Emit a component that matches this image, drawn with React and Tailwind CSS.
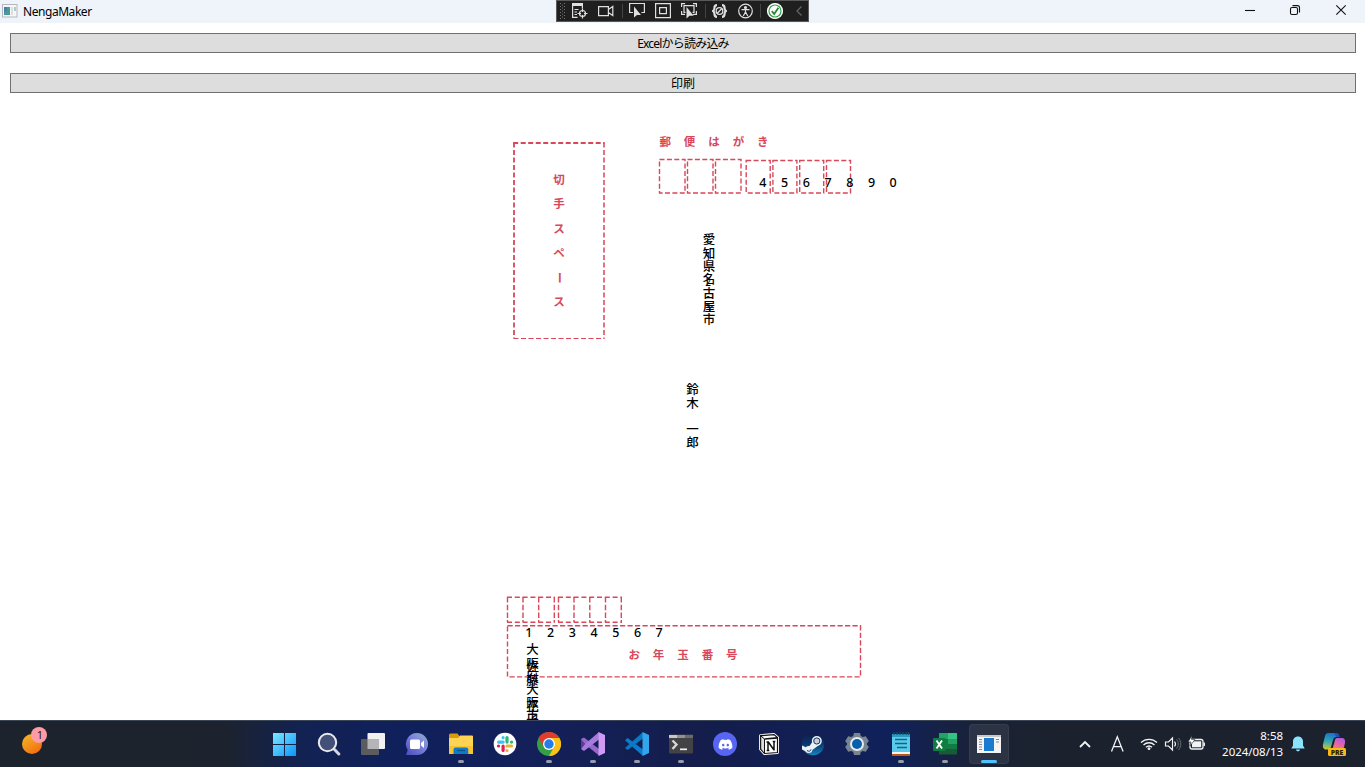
import React from "react";
import { FaDiscord } from "react-icons/fa";

const JP = "font-['Noto_Sans','Noto_Sans_CJK_JP',sans-serif]";
const RED = "#d9475a";

/* ---------- window chrome ---------- */

function DebugToolbar() {
  return (
    <div className="absolute left-[556px] top-0 flex h-[22px] w-[253px] border border-[#5a5a5a] bg-[#1f1f1f]">
      <svg width="251" height="20" viewBox="557 1 251 20" fill="none" stroke="#e0e0e0" strokeWidth="1.2">
        <g stroke="#777" strokeWidth="1" strokeDasharray="1 2">
          <path d="M560.5 3v16M564.5 3v16" />
          <path d="M562.5 4.5v14" />
        </g>
        <path d="M572 4.5h11" strokeWidth="3" />
        <path d="M572.6 4v13.4h5M582.4 5v3.500M574.500 9.500h4M574.500 12h2.500M574.500 14.500h2.500" />
        <circle cx="582.500" cy="13.500" r="3" />
        <path d="M582.500 8.500v3.500M582.500 15v3.500M577.500 13.500h3.500M584 13.500h3.500" />
        <path d="M598.600 6.600h9.800v9h-9.800zM608.400 9.500l4.400-3v9l-4.400-3" />
        <path d="M622.500 4v14M705.500 4v14M760.500 4v14" stroke="#444" strokeWidth="1" />
        <path d="M633 12.500h-3.400v-9h14.800v9h-3" />
        <path d="M634 6.500v11l3-2.600h4z" fill="#e0e0e0" stroke="none" />
        <path d="M655.600 3.600h14.800v14h-14.800zM659.600 7.600h6.800v6h-6.800z" />
        <path d="M681.600 7v-3.400h3.500M693 3.600h3.400v3.400M681.600 11v3.400h3.400M696.400 11v3.400h-3.400M687.500 5.600h-3.500v6.800h1.500M687.500 5.600h6.500v6.800h-1.500" />
        <path d="M686.500 7v11.500l3-2.800h4.200z" fill="#e0e0e0" stroke="none" />
        <path d="M717 5.200c-2.200 0-2.500.8-2.500 2.500 0 2-.5 2.800-1.500 3.300 1 .5 1.500 1.300 1.500 3.300 0 1.700.3 2.500 2.500 2.500M722 5.200c2.200 0 2.500.8 2.500 2.500 0 2 .5 2.800 1.500 3.300-1 .5-1.500 1.300-1.500 3.300 0 1.700-.3 2.500-2.500 2.500" strokeWidth="2.200" strokeLinejoin="round" />
        <circle cx="719.500" cy="11" r="3.300" strokeWidth="1.300" />
        <path d="M717.300 13.200l4.400-4.400" strokeWidth="1.300" />
        <circle cx="745.500" cy="11" r="6.800" />
        <circle cx="745.500" cy="7.500" r="1" fill="#e0e0e0" />
        <path d="M741.500 9.600h8M745.500 9.600v3.400M745.300 12.200l-2 3.800M745.700 12.200l2 3.800" />
        <circle cx="775" cy="11" r="7.500" fill="#fff" stroke="#fff" />
        <circle cx="775" cy="11" r="6" fill="#fff" stroke="#36a34a" />
        <path d="M771.800 11.200l2.400 2.800 4.200-6.200" stroke="#238a35" strokeWidth="1.800" />
        <path d="M801.500 6.500l-4.500 4.500 4.500 4.500" stroke="#666" />
      </svg>
    </div>
  );
}

function TitleBar() {
  return (
    <header className="relative flex h-[23px] items-center bg-[#eff3fa]">
      <svg className="-mt-[2px] ml-[2px] shrink-0" width="16" height="14" viewBox="0 0 16 14">
        <rect x=".5" y=".5" width="14.500" height="12.500" fill="#f6f6f6" stroke="#b4b8bd" />
        <rect x="2" y="3" width="6" height="8" fill="#4d9a92" />
        <path d="M2 3h3v3l-3 3z" fill="#4580b4" />
        <rect x="9" y="3" width="2" height="8" fill="#dedede" />
        <rect x="12" y="3" width="2" height="4" fill="#a8cfc3" />
      </svg>
      <span className={`ml-[5px] text-[12px] leading-none tracking-[-0.45px] text-black ${JP}`}>NengaMaker</span>
      <svg className="-mt-[2px] ml-auto mr-[13px]" width="108" height="14" viewBox="0 0 108 14" fill="none" stroke="#111" strokeWidth="1.100">
        <path d="M1 6.500h10" />
        <rect x="46.500" y="3.500" width="7" height="7" rx="1.500" />
        <path d="M48.500 1.600h5c1.300 0 2 .8 2 2v5" />
        <path d="M92.300 1.300l9.400 9.400M101.700 1.300l-9.400 9.400" />
      </svg>
      <DebugToolbar />
    </header>
  );
}

function WideButton({ children, className = "" }) {
  return (
    <button className={`flex h-[20px] w-full items-center justify-center border border-[#707070] bg-[#dddddd] pt-[2px] text-[12px] leading-none text-black ${JP} ${className}`}>
      {children}
    </button>
  );
}

/* ---------- postcard canvas ---------- */

function RowText({ text, className }) {
  return (
    <div className={`absolute flex leading-none ${JP} ${className}`}>
      {[...text].map((c, i) => (
        <span key={i} className="flex w-full items-center justify-center">{c}</span>
      ))}
    </div>
  );
}

/* Vertical writing, one cell per character; the long vowel mark is turned upright. */
function ColumnText({ text, className }) {
  return (
    <div className={`absolute flex flex-col items-center leading-none ${JP} ${className}`}>
      {[...text].map((c, i) => (
        <span key={i} className="flex min-h-0 w-full flex-1 items-center justify-center">
          <span className={c === "ー" ? "rotate-90" : ""}>{c}</span>
        </span>
      ))}
    </div>
  );
}

function Frames() {
  const upper = [659.5, 687.5, 715.5];
  const lower = [746.2, 772.9, 799.7, 826.500];
  return (
    <svg className="absolute left-0 top-0" width="1365" height="627" viewBox="0 93 1365 627" fill="none" stroke={RED} strokeWidth="1.500" strokeDasharray="5 2.500">
      <path d="M513.200 143h91.300" strokeWidth="1.800" />
      <path d="M514 142.500v196" strokeWidth="1.800" />
      <path d="M604 142.500v196" />
      <path d="M513.500 338.500h91" strokeWidth="1.200" />
      {upper.map((x) => (
        <path key={x} d={`M${x} 159.500h25.500v33.500h-25.500z`} strokeDasharray="5 2.400" strokeWidth="1.400" />
      ))}
      {lower.map((x) => (
        <path key={x} d={`M${x} 160.500h24v32.500h-24z`} strokeDasharray="5 2.400" strokeWidth="1.400" />
      ))}
      <path d="M507 597.200h47.800M558 597.200h64M507 622.300h47.800M558 622.300h64" strokeDasharray="5 2.800" strokeWidth="1.400" />
      <path d="M507.500 597v25M523 597v25M538.700 597v25M554.300 597v25M558.500 597v25M574 597v25M589.800 597v25M605.500 597v25M621.300 597v25" strokeDasharray="5.500 2.200" strokeWidth="1.400" />
      <path d="M507.500 625.700h353v51.200h-353z" strokeDasharray="5.200 2.300" strokeWidth="1.400" />
    </svg>
  );
}

function Postcard() {
  return (
    <main className="relative min-h-0 flex-1 overflow-hidden bg-white">
      <Frames />
      <RowText text="郵便はがき" className="left-[653px] top-[43px] w-[122px] text-[11.500px] font-bold text-[#d9475a]" />
      <ColumnText text="切手スペース" className="left-[549px] top-[74px] h-[147px] w-[20px] text-[11.500px] font-bold text-[#d9475a]" />
      <RowText text="お年玉番号" className="left-[622px] top-[556px] w-[122px] text-[11.500px] font-bold text-[#d9475a]" />
      <RowText text="4567890" className="left-[752px] top-[84px] w-[152px] text-[12.500px] font-medium text-black" />
      <RowText text="1234567" className="left-[518px] top-[534px] w-[152px] text-[12.500px] font-medium text-black" />
      <ColumnText text="愛知県名古屋市" className="left-[699px] top-[141px] h-[93px] w-[20px] text-[12.500px] font-medium text-black" />
      <ColumnText text="1-2-3" className="left-[698px] top-[156px] h-[66px] w-[20px] text-[10px] text-black" />
      <ColumnText text="鈴木　一郎" className="left-[682px] top-[291px] h-[66px] w-[21px] text-[12.500px] font-medium text-black" />
      <ColumnText text="大阪府大阪市" className="left-[522px] top-[551px] h-[79px] w-[21px] text-[12.500px] font-medium text-black" />
      <ColumnText text="佐藤　花子" className="left-[522px] top-[568px] h-[66px] w-[21px] text-[12.500px] font-medium text-black" />
    </main>
  );
}

/* ---------- taskbar icons, each on a 24 x 24 grid ---------- */

const Icon = ({ children }) => (
  <svg width="24" height="24" viewBox="0 0 24 24" fill="none">{children}</svg>
);

const StartIcon = () => (
  <Icon>
    <defs>
      <linearGradient id="start" x1="0" y1="0" x2="24" y2="24" gradientUnits="userSpaceOnUse">
        <stop stopColor="#7eeaff" /><stop offset="1" stopColor="#0794fa" />
      </linearGradient>
    </defs>
    <path fill="url(#start)" d="M0 1h11v11h-11zM12 1h11v11h-11zM0 13h11v11h-11zM12 13h11v11h-11z" />
  </Icon>
);

const SearchIcon = () => (
  <Icon>
    <path d="M17.500 17.500l4.300 4.500" stroke="#d5d8df" strokeWidth="3" strokeLinecap="round" />
    <circle cx="10.500" cy="10.500" r="8.700" fill="#435179" stroke="#e8eaf0" strokeWidth="2" />
  </Icon>
);

const TaskViewIcon = () => (
  <Icon>
    <rect x="6.500" y="1" width="17.500" height="16" rx="1" fill="#f1f1f1" />
    <rect y="7" width="18" height="16" rx="1" fill="#5c5c5e" />
    <path d="M6.500 7H18v10H6.500z" fill="#b5b5b7" />
  </Icon>
);

const ChatIcon = () => (
  <Icon>
    <defs>
      <linearGradient id="chat" x1="2" y1="22" x2="20" y2="2" gradientUnits="userSpaceOnUse">
        <stop stopColor="#4d4fc0" /><stop offset=".6" stopColor="#7d83dc" /><stop offset="1" stopColor="#8da5ce" />
      </linearGradient>
    </defs>
    <path d="M12 1a11 11 0 1 1 0 22H1l1.700-5A11 11 0 0 1 12 1z" fill="url(#chat)" />
    <rect x="5" y="7.500" width="10" height="9.500" rx="1.500" fill="#fff" />
    <path d="M16 11l3-2.500v7.500l-3-2.500z" fill="#fff" />
  </Icon>
);

const FolderIcon = () => (
  <Icon>
    <path d="M0 3a1.500 1.500 0 0 1 1.500-1.500h7L11 5v4H0z" fill="#d99b08" />
    <path d="M0 6h9l2-2.500h12a1 1 0 0 1 1 1V22H0z" fill="#ffd354" />
    <path d="M0 14h24v8H0z" fill="#f9c431" />
    <path d="M4.500 22v-4.500a2 2 0 0 1 2-2h10.800a2 2 0 0 1 2 2V22z" fill="#117ac8" />
    <path d="M8 18.500h8" stroke="#075184" strokeWidth="1.200" />
  </Icon>
);

const SlackIcon = () => (
  <Icon>
    <circle cx="12" cy="12" r="11.300" fill="#fff" />
    <g strokeWidth="3.200" strokeLinecap="round">
      <path d="M5.600 10.100h4.500M10.100 5.500v.1" stroke="#36c5f0" />
      <path d="M14 5.600v4.500M18.500 10.100h.1" stroke="#2eb67d" />
      <path d="M14 14h4.500M14 18.500v.1" stroke="#ecb22e" />
      <path d="M10.100 14v4.500M5.500 14h.1" stroke="#e01e5a" />
    </g>
  </Icon>
);

const ChromeIcon = () => (
  <Icon>
    <circle cx="12" cy="12" r="12" fill="#34a045" />
    <path d="M1.600 6A12 12 0 0 1 22.400 6L12 12l-5 3z" fill="#e33b2e" />
    <path d="M22.400 6A12 12 0 0 1 12 24l5-9-5-9z" fill="#fbc116" />
    <circle cx="12" cy="12" r="6" fill="#fff" />
    <circle cx="12" cy="12" r="4.700" fill="#247de8" />
  </Icon>
);

const VisualStudioIcon = () => (
  <Icon>
    <path d="M0 7l3-1.500L18 17v6.500L0 9z" fill="#9867ca" />
    <path d="M0 7l4 5-4 5z" fill="#60399d" />
    <path d="M0 17l3 2L18 7.500V0L4 12z" fill="#a77add" />
    <path d="M17.500 0L24 3v18l-6.500 3z" fill="#d09bf4" />
  </Icon>
);

const VSCodeIcon = () => (
  <Icon>
    <path d="M0 8.200L2.600 6 18 17.500V24z" fill="#087ccf" />
    <path d="M0 16l2.600 2L18 6.500V0z" fill="#0b78bf" />
    <path d="M17.500 0L24 3v18l-6.500 3z" fill="#32a5ed" />
  </Icon>
);

const TerminalIcon = () => (
  <Icon>
    <rect y="2.500" width="24" height="19" rx="1" fill="#434345" />
    <path d="M0 3h8v3H0z" fill="#c8c8c8" />
    <path d="M8 3h8v3H8z" fill="#929292" />
    <path d="M16 3h8v3h-8z" fill="#6b6b6b" />
    <path d="M3.500 8.500l4 4-4 4.500" stroke="#d8d8d8" strokeWidth="2.300" />
    <path d="M11 17.300h7" stroke="#eee" strokeWidth="1.700" />
  </Icon>
);

const DiscordIcon = () => (
  <span className="flex size-6 items-center justify-center rounded-full bg-[#5865f2] text-[15px] text-white">
    <FaDiscord />
  </span>
);

const NotionIcon = () => (
  <Icon>
    <path d="M3.500 3.700L17 2.600l3.500 3V20.500L7.500 21.500 3.500 17z" fill="#fff" stroke="#fff" strokeWidth="3" strokeLinejoin="round" />
    <path d="M3.500 3.700L17 2.600l3.500 3V20.500L7.500 21.500 3.500 17z" fill="#fff" stroke="#111" strokeWidth="1.200" />
    <path d="M3.700 3.800L7.500 7v14.500L3.700 17z" fill="#ddd" stroke="#111" />
    <path d="M7.500 7l13-1.200" stroke="#111" strokeWidth="1.700" />
    <path d="M9.500 10h2.500M11 10v8.500M9.700 18.500h2.600M11.300 10l5.700 8M17 9.500v9M15.700 9.500h2.600" stroke="#111" strokeWidth="1.500" />
  </Icon>
);

const SteamIcon = () => (
  <Icon>
    <defs>
      <linearGradient id="steam" x1="12" y1="0" x2="12" y2="24" gradientUnits="userSpaceOnUse">
        <stop stopColor="#101a48" /><stop offset=".5" stopColor="#08376d" /><stop offset="1" stopColor="#168bc5" />
      </linearGradient>
    </defs>
    <circle cx="12" cy="12" r="11.300" fill="url(#steam)" />
    <path d="M1 13.500l6 2.800L12 9l6 4-8 6-3 1.500-6-3z" fill="#eef0f4" />
    <circle cx="7.800" cy="17.500" r="3.500" fill="#eef0f4" />
    <circle cx="15.800" cy="9" r="5" fill="#eef0f4" />
    <circle cx="15.800" cy="9" r="3.100" fill="#c8cedb" stroke="#12376b" />
    <path d="M6 18.500c1.500 1.500 4 .5 4-1.200" stroke="#12376b" />
  </Icon>
);

const SettingsIcon = () => (
  <Icon>
    <path d="M9 1h6l.8 3 2 1 3-.8L23.800 9 21.600 12l2.200 3-3 4.800-3-.8-2 1L15 23H9l-.8-3-2-1-3 .8L.2 15l2.200-3L.2 9l3-4.800 3 .8 2-1z" fill="#788490" />
    <circle cx="12" cy="12" r="7" fill="#e8ebee" />
    <circle cx="12" cy="12" r="5" fill="#075fae" />
  </Icon>
);

const NotepadIcon = () => (
  <Icon>
    <path d="M3 2h18v18H3z" fill="#5bcbea" />
    <path d="M3 2h18v3H3z" fill="#279bc4" />
    <path d="M3 20.500h18V24H3z" fill="#b95916" />
    <path d="M3 20h18v2H3z" fill="#f5f5f5" />
    <path d="M5 0v3M8 0v3M11 0v3M14 0v3M17 0v3M19.500 0v3" stroke="#14526d" strokeWidth="1.200" />
    <path d="M6 7.500h12M6 11.500h12M8 15.500h10" stroke="#126587" strokeWidth="1.500" />
  </Icon>
);

const ExcelIcon = () => (
  <Icon>
    <path d="M6 1h9v7H6z" fill="#21a366" />
    <path d="M15 1h9v6h-9z" fill="#33c481" />
    <path d="M6 7h9v11H6z" fill="#107c41" />
    <path d="M15 7h9v5h-9z" fill="#21a366" />
    <path d="M15 12h9v6h-9z" fill="#107c41" />
    <path d="M6 17h18v5.500H6z" fill="#185c37" />
    <rect y="6" width="12.500" height="13" rx="1" fill="#107c41" />
    <path d="M3.500 8.500l5.500 8M9 8.500l-5.500 8" stroke="#fff" strokeWidth="1.900" />
  </Icon>
);

const AppIcon = () => (
  <Icon>
    <path d="M0 3h24v18H0z" fill="#f4f4f4" />
    <path d="M0 3h24v2H0z" fill="#c8c8c8" />
    <path d="M7 6h10v13H7z" fill="#187bd0" />
    <path d="M2 7.500h3M2 10h3M2 12.500h3M2 15h3M2 17.500h3M19 7.500h3M19 10h3" stroke="#888" />
  </Icon>
);

const APPS = [
  [StartIcon], [SearchIcon], [TaskViewIcon], [ChatIcon], [FolderIcon, true], [SlackIcon],
  [ChromeIcon, true], [VisualStudioIcon, true], [VSCodeIcon, true], [TerminalIcon, true],
  [DiscordIcon], [NotionIcon], [SteamIcon], [SettingsIcon], [NotepadIcon, true],
  [ExcelIcon, true], [AppIcon, "active"],
];

function AppSlot({ Glyph, state }) {
  return (
    <div className={`relative flex h-10 w-10 items-center justify-center rounded ${state === "active" ? "bg-white/8 ring-1 ring-inset ring-white/5" : ""}`}>
      <Glyph />
      {state && (
        <span className={`absolute bottom-px h-[3px] rounded-full ${state === "active" ? "w-4 bg-[#4cc2ff]" : "w-1.5 bg-[#969cae]"}`} />
      )}
    </div>
  );
}

function Tray() {
  return (
    <svg width="130" height="24" viewBox="1077 732 130 24" fill="none" stroke="#f2f3f5" strokeWidth="1.500">
      <path d="M1080 747l5-5 5 5" strokeWidth="1.800" />
      <path d="M1111.500 751.500l5.800-14.800 5.800 14.800M1113.500 746.700h7.600" strokeWidth="1.300" />
      <path d="M1141 742.500c4.500-4.300 11.500-4.300 16 0M1143.500 745c3.200-3 7.800-3 11 0M1146 747.300c1.800-1.600 4.200-1.600 6 0" strokeWidth="1.300" />
      <circle cx="1149" cy="748.700" r="1" fill="#fff" strokeWidth="1" />
      <path d="M1165.500 742h3l4-4v12l-4-4h-3z" strokeWidth="1.200" />
      <path d="M1174.500 741.500c1.200 1.500 1.200 3.500 0 5" strokeWidth="1.200" />
      <path d="M1176.500 739.500c2.400 2.500 2.400 6.500 0 9M1178.500 738c3 3.500 3 8.500 0 12" stroke="#6b717b" strokeWidth="1" />
      <rect x="1190" y="739.500" width="13" height="9.500" rx="2" strokeWidth="1.300" />
      <rect x="1192" y="741.300" width="9.200" height="6" fill="#f2f3f5" stroke="none" />
      <path d="M1204.200 742.500v3.500" />
      <path d="M1192 735.500l-4 6.500h3l-1 4 5-6.500h-3.500z" fill="#fff" stroke="#1b222e" strokeWidth=".6" />
    </svg>
  );
}

function Copilot() {
  return (
    <svg width="26" height="25" viewBox="0 0 26 25">
      <defs>
        <linearGradient id="cop1" x1="8" y1="0" x2="5" y2="18" gradientUnits="userSpaceOnUse">
          <stop stopColor="#176bd0" /><stop offset=".5" stopColor="#2ea6b4" /><stop offset="1" stopColor="#d6c72c" />
        </linearGradient>
        <linearGradient id="cop2" x1="20" y1="5" x2="14" y2="20" gradientUnits="userSpaceOnUse">
          <stop stopColor="#a45bea" /><stop offset=".5" stopColor="#e565a7" /><stop offset="1" stopColor="#f78a55" />
        </linearGradient>
      </defs>
      <path d="M6 1h8c2 0 3 1.500 3.500 4h-3c-2 0-3 1-3.500 3l-2 7c-.5 2-1.500 2.500-3 2.500H4C1.500 17.500.5 15 1 12.500L3 4c.5-2 1.500-3 3-3z" fill="url(#cop1)" />
      <path d="M15 6h4.500c3 0 4 2 3.500 5l-1.500 6h-11l2.500-9c.3-1.300 1-2 2-2z" fill="url(#cop2)" />
      <path d="M12 1h2.500c1.500 0 2.500 1.500 3 4h-3z" fill="#1f4fb5" />
      <rect x="6" y="16" width="18" height="8" rx="1.500" fill="#fbb914" />
      <text x="15" y="22.500" textAnchor="middle" fontFamily="Open Sans, sans-serif" fontWeight="800" fontSize="6.800" fill="#2a2000">PRE</text>
    </svg>
  );
}

function Taskbar() {
  return (
    <footer className="flex h-[47px] shrink-0 items-center border-t border-[#3a4657] bg-[linear-gradient(90deg,#1c232d_0,#1c232e_225px,#122252_300px,#10205c_400px,#13205a_520px,#141d4b_700px,#10215a_890px,#1a2236_980px,#1b222e_1050px,#1b222d_100%)]">
      <div className="-mt-[9px] flex w-[263px] pl-[20px]">
        <svg width="28" height="30" viewBox="20 725 28 30">
          <defs>
            <linearGradient id="sun" x1="24" y1="734" x2="38" y2="754" gradientUnits="userSpaceOnUse">
              <stop stopColor="#f4b82b" /><stop offset="1" stopColor="#f36a0c" />
            </linearGradient>
          </defs>
          <circle cx="32" cy="744" r="10" fill="url(#sun)" />
          <circle cx="39" cy="735" r="8" fill="#ff9ba5" />
          <text x="40" y="739" textAnchor="middle" fontFamily="Open Sans, sans-serif" fontSize="11" fill="#111">1</text>
        </svg>
      </div>
      <nav className="flex gap-1 pl-[2px]">
        {APPS.map(([Glyph, state], i) => (
          <AppSlot key={i} Glyph={Glyph} state={state} />
        ))}
      </nav>
      <div className="ml-auto flex items-center pr-[17px]">
        <Tray />
        <div className={`w-[76px] text-right text-[11.500px] leading-[16px] tracking-[-0.03px] text-white ${JP}`}>
          <div>8:58</div>
          <div>2024/08/13</div>
        </div>
        <svg className="ml-[8px]" width="14" height="16" viewBox="0 0 14 16">
          <path d="M7 .5c3 0 5 2.200 5 5v4l1.700 3H.3l1.700-3v-4c0-2.800 2-5 5-5zM5 13.500h4c-.3 1.300-1 1.800-2 1.800s-1.700-.5-2-1.800z" fill="#8be4ff" />
        </svg>
        <div className="ml-[17px]"><Copilot /></div>
      </div>
    </footer>
  );
}

export default function App() {
  return (
    <div className="flex h-[767px] w-[1365px] flex-col overflow-hidden bg-white">
      <TitleBar />
      <div className="flex flex-col gap-[20px] pl-[10px] pr-[9px] pt-[10px]">
        <WideButton className="tracking-[-0.8px]">Excelから読み込み</WideButton>
        <WideButton>印刷</WideButton>
      </div>
      <Postcard />
      <Taskbar />
    </div>
  );
}
